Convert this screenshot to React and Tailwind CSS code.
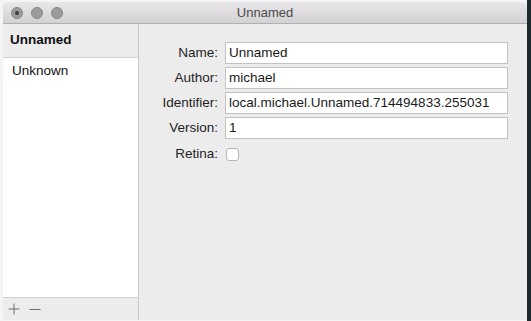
const fields = [
  { label: 'Name:', value: 'Unnamed' },
  { label: 'Author:', value: 'michael' },
  { label: 'Identifier:', value: 'local.michael.Unnamed.714494833.255031' },
  { label: 'Version:', value: '1' },
];

const TrafficLight = ({ dot }) => (
  <div className="w-[12px] h-[12px] rounded-full bg-[#9b9b9b] border border-[#858585] flex items-center justify-center">
    {dot && <div className="w-[4px] h-[4px] rounded-full bg-[#3a3a3a]" />}
  </div>
);

const App = () => {
  return (
    <div
      className="w-[531px] h-[321px] flex bg-[#f4f4f4] overflow-hidden"
      style={{ fontFamily: '"Liberation Sans", Arial, sans-serif' }}
    >
      <div className="w-[3px] shrink-0" />
      <div className="mt-[2px] w-[524px] h-[318px] shrink-0 flex flex-col rounded-t-[5px] rounded-b-[4px] overflow-hidden bg-[#ececec]">
        {/* title bar */}
        <div className="relative h-[22px] shrink-0 flex items-center border-b border-[#b0b0b0] bg-gradient-to-b from-[#e9e7e9] to-[#d3d1d3]">
          <div className="flex gap-[8px] pl-[8px]">
            <TrafficLight dot />
            <TrafficLight />
            <TrafficLight />
          </div>
          <div className="absolute inset-0 flex items-center justify-center text-[13px] text-[#4a4a4a]">
            Unnamed
          </div>
        </div>

        <div className="flex flex-1 min-h-0">
          {/* sidebar */}
          <div className="w-[136px] shrink-0 flex flex-col border-r border-[#c9c9c9]">
            <div className="h-[34px] shrink-0 flex items-center pl-[7px] border-b border-[#d2d2d2] bg-[#ececec] text-[13.5px] font-bold text-[#111]">
              Unnamed
            </div>
            <div className="flex-1 bg-white pt-[3px] pl-[9px] text-[13.5px] text-[#111]">
              Unknown
            </div>
            <div className="h-[23px] shrink-0 flex items-center gap-[9px] pl-[5px] border-t border-[#cfcfcf] bg-[#ececec] text-[#6e6e6e]">
              <svg width="12" height="12" viewBox="0 0 12 12" fill="none" stroke="currentColor" strokeWidth="1">
                <path d="M6 0.5v11M0.5 6h11" />
              </svg>
              <svg width="12" height="12" viewBox="0 0 12 12" fill="none" stroke="currentColor" strokeWidth="1">
                <path d="M0.5 6.5h11" />
              </svg>
            </div>
          </div>

          {/* form */}
          <div className="flex-1 pt-[18px] pr-[19px]">
            <div className="grid grid-cols-[79px_1fr] gap-x-[7px] gap-y-[3px] text-[13.5px] text-[#1a1a1a]">
              {fields.map((f) => (
                <div key={f.label} className="contents">
                  <div className="h-[22px] flex items-center justify-end text-[#1e1e1e]">{f.label}</div>
                  <div className="h-[22px] flex items-center pl-[3px] bg-white border border-[#c2c2c2] whitespace-nowrap overflow-hidden">
                    {f.value}
                  </div>
                </div>
              ))}
              <div className="h-[25px] flex items-center justify-end text-[#1e1e1e]">Retina:</div>
              <div className="h-[25px] flex items-center pl-[1px]">
                <div className="w-[13px] h-[13px] rounded-[3px] bg-white border border-[#b5b5b5]" />
              </div>
            </div>
          </div>
        </div>
      </div>
      <div className="flex-1 bg-[#1c2a30]" />
    </div>
  );
};

export default App;
